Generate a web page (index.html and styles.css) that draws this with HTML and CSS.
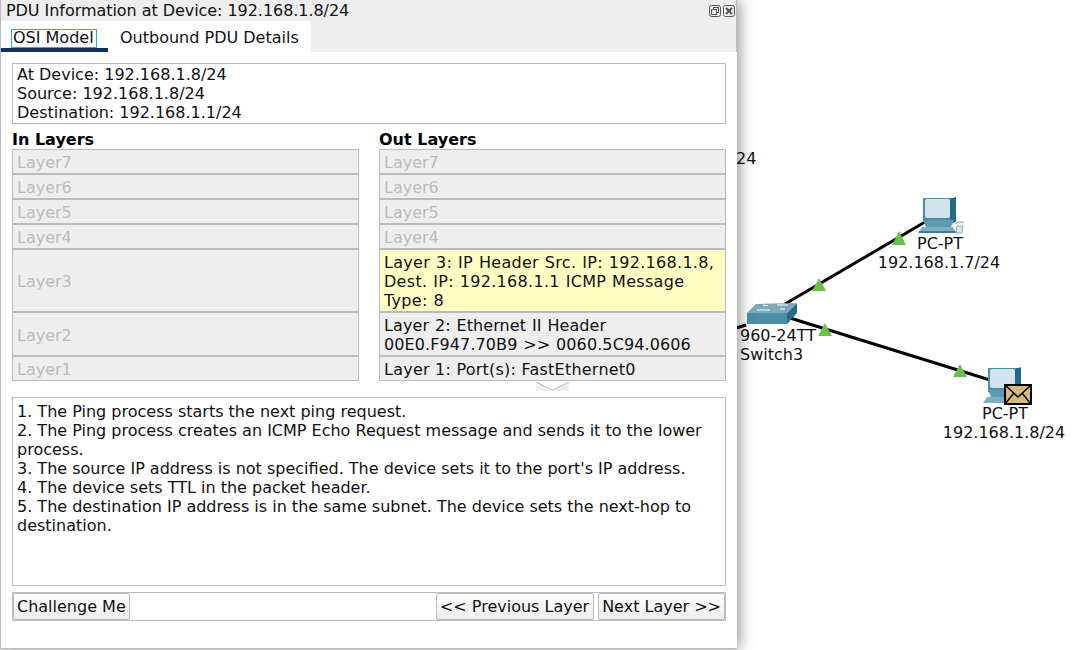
FILE: index.html
```html
<!DOCTYPE html>
<html lang="en">
<head>
  <meta charset="UTF-8" />
  <title>PDU Information at Device</title>
  <link rel="stylesheet" href="styles.css">
</head>
<body>
  <div class="workspace">
    <svg class="links" width="1074" height="650" viewBox="0 0 1074 650">
      <g stroke="#000" stroke-width="3" fill="none">
        <line x1="925" y1="222" x2="785" y2="304" />
        <line x1="790" y1="318" x2="990" y2="380" />
        <line x1="730" y1="330" x2="746" y2="325" />
      </g>
      <g fill="#6cbf4a">
        <polygon points="899,231 906,245 892,245" />
        <polygon points="819,278 826,291 812,291" />
        <polygon points="825,323 832,336 818,336" />
        <polygon points="960,364 967,377 953,377" />
      </g>
    </svg>

    <div class="stray-label">24</div>

    <!-- PC 1 -->
    <svg class="device pc-top" width="48" height="38" viewBox="0 0 48 38">
      <path d="M5 1 H37 V25 H5 Z" fill="#4b8fa6" />
      <path d="M32 2 L38 0 V25 L32 27 Z" fill="#1f6b85" />
      <rect x="7" y="2" width="25" height="19" rx="2" fill="#d3e3ec" />
      <path d="M5 23 H36 L33 30 H8 Z" fill="#5b9bb0" />
      <path d="M4 30 H35 L38 36 H0 Z" fill="#7fb0c2" />
      <path d="M1 34 H38 V36 H1 Z" fill="#3f7f96" />
      <path d="M37 27 Q42 23 46 26 M39 29 H45 L44 36 H38 Z" fill="#dce8ed" stroke="#6d9fb2" stroke-width="0.8" />
    </svg>
    <div class="node-label pc-top-label"><span class="node-name">PC-PT</span><br>192.168.1.7/24</div>

    <!-- switch -->
    <svg class="device switch-icon" width="50" height="24" viewBox="0 0 50 24">
      <path d="M0 11 L9 2 L50 1 L40 11 Z" fill="#7fa9b8" />
      <path d="M0 11 H40 V22 H0 Z" fill="#4c8ea6" />
      <path d="M40 11 L50 1 V11 L40 22 Z" fill="#1f6f88" />
      <g stroke="#e8f2f5" stroke-width="1.2">
        <line x1="16" y1="3.5" x2="21" y2="3.5" />
        <line x1="30" y1="3" x2="41" y2="3" />
        <line x1="10" y1="8" x2="23" y2="8" />
        <line x1="33" y1="7" x2="38" y2="7" />
      </g>
    </svg>
    <div class="node-label switch-label">960-24TT<br>Switch3</div>

    <!-- PC 2 with the PDU envelope on it -->
    <svg class="device pc-bottom" width="50" height="40" viewBox="0 0 50 40">
      <path d="M5 1 H37 V25 H5 Z" fill="#4b8fa6" />
      <path d="M32 2 L38 0 V25 L32 27 Z" fill="#1f6b85" />
      <rect x="7" y="2" width="25" height="19" rx="2" fill="#d3e3ec" />
      <path d="M5 23 H36 L33 30 H8 Z" fill="#5b9bb0" />
      <path d="M4 30 H36 L40 36 H0 Z" fill="#7fb0c2" />
      <rect x="22" y="18" width="26" height="19" fill="#d4b97c" stroke="#000" stroke-width="2" />
      <path d="M22 18 L35 30 L48 18 M22 37 L31 26 M48 37 L39 26" fill="none" stroke="#000" stroke-width="1.4" />
    </svg>
    <div class="node-label pc-bottom-label"><span class="node-name">PC-PT</span><br>192.168.1.8/24</div>

    <div class="pdu-window">
      <div class="title-bar">
        <span class="title-text">PDU Information at Device: 192.168.1.8/24</span>
        <span class="title-buttons">
          <svg width="12" height="12" viewBox="0 0 12 12" fill="none" stroke="#555" stroke-width="1">
            <rect x="0.5" y="0.5" width="11" height="11" rx="2" />
            <rect x="4.5" y="2.5" width="5" height="5" />
            <rect x="2.5" y="4.5" width="5" height="5" fill="#eee" />
          </svg>
          <svg width="12" height="12" viewBox="0 0 12 12" fill="none" stroke="#555" stroke-width="1">
            <rect x="0.5" y="0.5" width="11" height="11" rx="2" />
            <path d="M3 3 L9 9 M9 3 L3 9" stroke-width="2" />
          </svg>
        </span>
      </div>

      <div class="tab-bar">
        <div class="tab tab-active"><span class="tab-focus">OSI Model</span></div>
        <div class="tab">Outbound PDU Details</div>
      </div>

      <div class="content">
        <div class="info-box">
          At Device: 192.168.1.8/24<br>
          Source: 192.168.1.8/24<br>
          Destination: 192.168.1.1/24
        </div>

        <div class="layers">
          <h2 class="layers-title">In Layers</h2>
          <h2 class="layers-title">Out Layers</h2>

          <div class="layer off">Layer7</div>
          <div class="layer off">Layer7</div>
          <div class="layer off">Layer6</div>
          <div class="layer off">Layer6</div>
          <div class="layer off">Layer5</div>
          <div class="layer off">Layer5</div>
          <div class="layer off">Layer4</div>
          <div class="layer off">Layer4</div>
          <div class="layer off">Layer3</div>
          <div class="layer current">Layer 3: IP Header Src. IP: 192.168.1.8, Dest. IP: 192.168.1.1 ICMP Message Type: 8</div>
          <div class="layer off">Layer2</div>
          <div class="layer header-two">Layer 2: Ethernet II Header 00E0.F947.70B9 &gt;&gt; 0060.5C94.0606</div>
          <div class="layer off">Layer1</div>
          <div class="layer header-one">Layer 1: Port(s): FastEthernet0</div>
        </div>

        <div class="splitter">
          <svg width="33" height="9" viewBox="0 0 33 9">
            <rect width="33" height="9" fill="#eee" />
            <polygon points="0,0 33,0 16.5,8" fill="#fff" />
            <polyline points="0,0 16.5,8 33,0" fill="none" stroke="#bbb" stroke-width="1" />
          </svg>
        </div>

        <div class="description">
          1. The Ping process starts the next ping request.<br>
          2. The Ping process creates an ICMP Echo Request message and sends it to the lower process.<br>
          3. The source IP address is not specified. The device sets it to the port's IP address.<br>
          4. The device sets TTL in the packet header.<br>
          5. The destination IP address is in the same subnet. The device sets the next-hop to destination.
        </div>

        <div class="button-bar">
          <button class="btn">Challenge Me</button>
          <span class="spacer"></span>
          <button class="btn btn-prev">&lt;&lt; Previous Layer</button>
          <button class="btn">Next Layer &gt;&gt;</button>
        </div>
      </div>
    </div>
  </div>
</body>
</html>
```

FILE: styles.css
```css
html, body {
  margin: 0;
  padding: 0;
  background: #fff;
  overflow: hidden;
}
body {
  font-family: "DejaVu Sans", sans-serif;
  font-size: 16px;
  line-height: 19px;
  color: #111;
}

.workspace {
  position: relative;
  width: 1074px;
  height: 650px;
  overflow: hidden;
}
.links { position: absolute; left: 0; top: 0; }
.device { position: absolute; }
.pc-top { left: 918px; top: 197px; }
.switch-icon { left: 747px; top: 302px; }
.pc-bottom { left: 983px; top: 367px; }

.node-label {
  position: absolute;
  text-align: center;
  white-space: nowrap;
}
.node-name { padding-left: 2px; }
.pc-top-label { left: 869px; top: 234px; width: 140px; }
.pc-bottom-label { left: 934px; top: 404px; width: 140px; }
.switch-label { left: 740px; top: 326px; text-align: left; }
.stray-label { position: absolute; left: 736px; top: 149px; }

/* the floating window */
.pdu-window {
  position: absolute;
  left: 0;
  top: 0;
  width: 737px;
  height: 649px;
  box-sizing: border-box;
  background: #fff;
  border-left: 1px solid #bbb;
  border-bottom: 1px solid #bbb;
  box-shadow: 2px 0 14px rgba(0,0,0,0.45);
}
.title-bar {
  display: flex;
  justify-content: space-between;
  align-items: center;
  height: 21px;
  padding: 0 1px 0 5px;
  background: #eee;
  border-right: 1px solid #bbb;
}
.title-text { letter-spacing: -0.05px; }
.title-buttons { display: flex; gap: 2px; }
.title-buttons svg { display: block; }

.tab-bar {
  display: flex;
  height: 31px;
  background: #eee;
  border-right: 1px solid #bbb;
}
.tab {
  padding: 7px 12px 0;
  background: #fff;
}
.tab-active {
  width: 83px;
  border-bottom: 4px solid #12305a;
  height: 20px;
}
.tab-focus {
  display: inline-block;
  margin-left: -2px;
  padding: 0 1px;
  width: 82px;
  height: 17px;
  line-height: 16px;
  border: 1px solid #2fa8d5;
  white-space: nowrap;
}

.content { padding: 11px 11px 0; }

.info-box {
  border: 1px solid #bbb;
  height: 58px;
  padding: 1px 4px 0;
}

.layers {
  display: grid;
  grid-template-columns: 347px 347px;
  grid-template-rows: 25px 25px 25px 25px 25px 63px 44px 25px;
  column-gap: 20px;
}
.layers-title {
  margin: 0;
  font-size: 16px;
  font-weight: bold;
  color: #000;
  align-self: end;
  line-height: 19px;
}
.layer {
  display: flex;
  align-items: center;
  box-sizing: border-box;
  border: 1px solid #bbb;
  background: #eee;
  padding: 2px 4px 0;
}
.layer.off { color: #bbb; }
.layer.current { background: #ffffc4; letter-spacing: 0.3px; word-spacing: 0.5px; }
.layer.header-two { letter-spacing: 0.1px; word-spacing: 0.6px; }
.layer.header-one { letter-spacing: 0.23px; }

.splitter {
  display: grid;
  grid-template-columns: 347px 347px;
  column-gap: 20px;
  height: 16px;
  padding-top: 1px;
  box-sizing: border-box;
}
.splitter svg { display: block; grid-column: 2; justify-self: center; }

.description {
  box-sizing: border-box;
  height: 189px;
  border: 1px solid #bbb;
  padding: 4px;
}

.button-bar {
  display: flex;
  gap: 4px;
  height: 27px;
  margin-top: 6px;
  border: 1px solid #bbb;
}
.spacer { flex: 1; }
.btn {
  font-family: inherit;
  font-size: 16px;
  color: #111;
  padding: 0 3px;
  border: 1px solid #bbb;
  border-radius: 2px;
  background: linear-gradient(#fff, #ececec);
}
.btn-prev { padding-right: 4px; }
```
